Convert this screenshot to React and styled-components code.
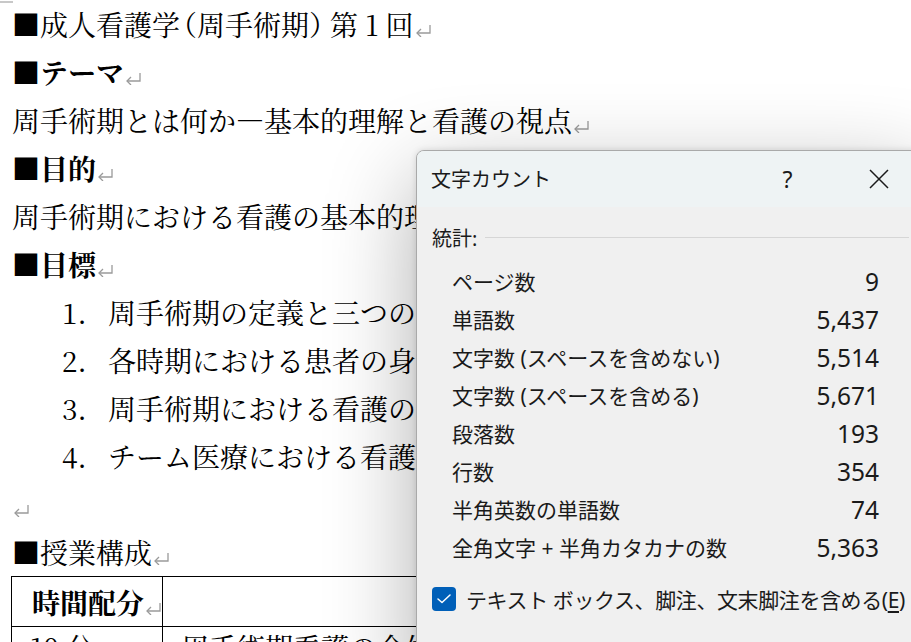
import React from "react";
import styled, { createGlobalStyle } from "styled-components";

const GlobalStyle = createGlobalStyle`
  html, body {
    margin: 0;
    padding: 0;
    background: #ffffff;
    width: 911px;
    height: 642px;
    overflow: hidden;
  }
  * { box-sizing: border-box; }
`;

const Screen = styled.div`
  position: relative;
  width: 911px;
  height: 642px;
  overflow: hidden;
  background: #ffffff;
`;

const Page = styled.div`
  padding-left: 12px;
  font-family: "Noto Serif CJK JP", "Noto Sans CJK JP", serif;
  font-size: 28px;
  color: #000;
  &::before {
    content: "";
    position: absolute;
    left: 0;
    top: 1px;
    width: 13px;
    height: 2px;
    background: #c8c8c8;
  }
`;

const Line = styled.p`
  margin: 0;
  height: 48px;
  line-height: 48px;
  white-space: nowrap;
  font-weight: ${(p) => (p.$bold ? 700 : 400)};
`;

const Paren = styled.span`
  font-feature-settings: "halt";
  padding-left: ${(p) => (p.$open ? 3 : 0)}px;
  padding-right: ${(p) => (p.$open ? 0 : 7)}px;
`;

const ListLine = styled.div`
  display: flex;
  align-items: center;
  height: 48px;
  line-height: 48px;
  padding-left: 50px;
  white-space: nowrap;
`;

const Num = styled.span`
  width: 46px;
  flex: none;
`;

const MarkSvg = styled.svg`
  display: inline-block;
  width: 17px;
  height: 14px;
  margin-left: 1px;
  vertical-align: -1px;
`;

const ParaMark = () => (
  <MarkSvg viewBox="0 0 17 14" fill="none" stroke="#9a9a9a" strokeWidth="1.3">
    <path d="M15 2 V10 H2" />
    <path d="M6 6 L2 10 L6 14" />
  </MarkSvg>
);

const Table = styled.table`
  border-collapse: collapse;
  margin-left: -1px;
`;

const Cell = styled.td`
  border: 1.5px solid #000;
  height: ${(p) => p.$h || 50}px;
  width: ${(p) => p.$w}px;
  padding: 0 0 0 ${(p) => p.$pl || 18}px;
  line-height: 28px;
  vertical-align: ${(p) => (p.$top ? "top" : "middle")};
  padding-top: ${(p) => (p.$top ? 6 : 0)}px;
  text-align: ${(p) => (p.$center ? "center" : "left")};
  font-weight: ${(p) => (p.$bold ? 700 : 400)};
  white-space: nowrap;
`;

/* ---------- Dialog ---------- */

const Dialog = styled.div`
  position: absolute;
  left: 416px;
  top: 150px;
  width: 509px;
  height: 540px;
  background: #f0f0f0;
  border: 1px solid #a9a9a9;
  border-radius: 8px;
  overflow: hidden;
  box-shadow: 0 28px 90px rgba(0, 0, 0, 0.32), 0 0 6px rgba(0, 0, 0, 0.12);
  font-family: "Noto Sans", "Noto Sans CJK JP", sans-serif;
  color: #1a1a1a;
`;

const TitleBar = styled.div`
  display: flex;
  align-items: center;
  height: 56px;
  padding-left: 14px;
  background: #eef3f4;
`;

const Title = styled.div`
  flex: 1;
  font-size: 20px;
  line-height: 28px;
  padding-top: 2px;
`;

const TitleButton = styled.div`
  width: 91px;
  height: 56px;
  display: flex;
  align-items: center;
  justify-content: center;
  font-size: 23px;
  color: #1a1a1a;
`;

const Body = styled.div`
  padding: 0 15px;
`;

const GroupLabel = styled.div`
  display: flex;
  align-items: center;
  height: 30px;
  margin-top: 15px;
  font-size: 20px;
`;

const GroupRule = styled.div`
  flex: 1;
  height: 1px;
  background: #d6d6d6;
  margin-left: 8px;
`;

const Stats = styled.div`
  margin: 10px 30px 0 20px;
`;

const StatRow = styled.div`
  display: flex;
  justify-content: space-between;
  align-items: center;
  height: 38px;
  font-size: 21px;
  white-space: nowrap;
`;

const Value = styled.span`
  font-size: 24.5px;
`;

const CheckRow = styled.div`
  display: flex;
  align-items: center;
  gap: 10px;
  height: 30px;
  margin-top: 18px;
  font-size: 21px;
  letter-spacing: -0.4px;
  white-space: nowrap;
`;

const CheckBox = styled.div`
  width: 24px;
  height: 24px;
  flex: none;
  border-radius: 4px;
  background: #005fb8;
  display: flex;
  align-items: center;
  justify-content: center;
`;

const Underline = styled.span`
  text-decoration: underline;
  text-underline-offset: 3px;
`;

const stats = [
  ["ページ数", "9"],
  ["単語数", "5,437"],
  ["文字数 (スペースを含めない)", "5,514"],
  ["文字数 (スペースを含める)", "5,671"],
  ["段落数", "193"],
  ["行数", "354"],
  ["半角英数の単語数", "74"],
  ["全角文字 + 半角カタカナの数", "5,363"],
];

const goals = [
  "周手術期の定義と三つの段階を説明できる",
  "各時期における患者の身体的・心理的変化を理解する",
  "周手術期における看護の役割を述べることができる",
  "チーム医療における看護師の役割を理解する",
];

export default function App() {
  return (
    <>
      <GlobalStyle />
      <Screen>
        <Page>
          <Line>
            ■成人看護学<Paren $open>（</Paren>周手術期<Paren>）</Paren>第 1 回<ParaMark />
          </Line>
          <Line $bold>■テーマ<ParaMark /></Line>
          <Line>周手術期とは何か―基本的理解と看護の視点<ParaMark /></Line>
          <Line $bold>■目的<ParaMark /></Line>
          <Line>周手術期における看護の基本的理解を深め、看護の視点を養う<ParaMark /></Line>
          <Line $bold>■目標<ParaMark /></Line>
          {goals.map((g, i) => (
            <ListLine key={i}>
              <Num>{i + 1}.</Num>
              {g}
              <ParaMark />
            </ListLine>
          ))}
          <Line><ParaMark /></Line>
          <Line>■授業構成<ParaMark /></Line>
          <Table>
            <tbody>
              <tr>
                <Cell $w={150} $pl={20} $bold>時間配分<ParaMark /></Cell>
                <Cell $w={620} $center $bold>内容<ParaMark /></Cell>
              </tr>
              <tr>
                <Cell $w={150} $h={60} $top>10 分<ParaMark /></Cell>
                <Cell $w={620} $h={60} $top>周手術期看護の全体像<ParaMark /></Cell>
              </tr>
            </tbody>
          </Table>
        </Page>

        <Dialog>
          <TitleBar>
            <Title>文字カウント</Title>
            <TitleButton>?</TitleButton>
            <TitleButton>
              <svg width="20" height="20" viewBox="0 0 20 20" fill="none" stroke="#1a1a1a" strokeWidth="1.5">
                <path d="M1 1 L19 19 M19 1 L1 19" />
              </svg>
            </TitleButton>
          </TitleBar>
          <Body>
            <GroupLabel>
              統計:
              <GroupRule />
            </GroupLabel>
            <Stats>
              {stats.map(([label, value]) => (
                <StatRow key={label}>
                  <span>{label}</span>
                  <Value>{value}</Value>
                </StatRow>
              ))}
            </Stats>
            <CheckRow>
              <CheckBox>
                <svg width="14" height="10" viewBox="0 0 14 10" fill="none" stroke="#ffffff" strokeWidth="1.5" strokeLinecap="round" strokeLinejoin="round">
                  <path d="M1 5 L5 8.5 L13 1" />
                </svg>
              </CheckBox>
              <span>
                テキスト ボックス、脚注、文末脚注を含める(<Underline>E</Underline>)
              </span>
            </CheckRow>
          </Body>
        </Dialog>
      </Screen>
    </>
  );
}
